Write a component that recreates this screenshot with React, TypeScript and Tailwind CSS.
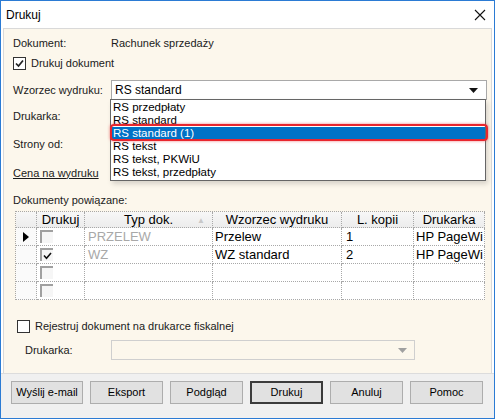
import React from "react";

const ui = { fontFamily: '"Liberation Sans", Arial, sans-serif' };

function WinCheck({ checked }: { checked?: boolean }) {
  return (
    <span className="flex h-[13px] w-[13px] shrink-0 items-center justify-center border border-[#333] bg-white">
      {checked && (
        <svg width="9" height="9" viewBox="0 0 9 9">
          <path d="M1 4.5 L3.5 7 L8 1.5" fill="none" stroke="#222" strokeWidth="1.7" />
        </svg>
      )}
    </span>
  );
}

function GridCheck({ checked }: { checked?: boolean }) {
  return (
    <span className="flex h-[13px] w-[13px] items-center justify-center border-l-2 border-t-2 border-l-[#a0a0a0] border-t-[#a0a0a0] bg-[#f6f6f6]">
      {checked && (
        <svg width="9" height="8" viewBox="0 0 9 8">
          <path d="M1 3.5 L3.5 6.2 L8 1" fill="none" stroke="#111" strokeWidth="1.6" />
        </svg>
      )}
    </span>
  );
}

const cols = "grid grid-cols-[21px_48px_128px_129px_72px_71px]";
const cell = "border-r border-b border-dotted border-[#a8a8a8] flex items-center overflow-hidden whitespace-nowrap";

const rows = [
  { mark: true, checked: false, typ: "PRZELEW", wz: "Przelew", kop: "1", dr: "HP PageWi" },
  { mark: false, checked: true, typ: "WZ", wz: "WZ standard", kop: "2", dr: "HP PageWi" },
  { mark: false, checked: false, typ: "", wz: "", kop: "", dr: "" },
  { mark: false, checked: false, typ: "", wz: "", kop: "", dr: "" },
];

const options = [
  "RS przedpłaty",
  "RS standard",
  "RS standard (1)",
  "RS tekst",
  "RS tekst, PKWiU",
  "RS tekst, przedpłaty",
];

export default function App() {
  return (
    <div
      style={ui}
      className="relative flex h-[419px] w-[495px] flex-col border border-[#2b7bd4] bg-white text-[11px] text-[#1a1a1a]"
    >
      {/* title bar */}
      <div className="flex h-[27px] shrink-0 items-center justify-between pl-[5px] pr-[8px]">
        <span className="text-[12px] text-black">Drukuj</span>
        <svg width="12" height="12" viewBox="0 0 12 12">
          <path d="M1 1 L11 11 M11 1 L1 11" stroke="#111" strokeWidth="1.1" />
        </svg>
      </div>

      {/* body */}
      <div className="relative mx-[2px] flex h-[345px] shrink-0 flex-col border border-b-0 border-[#d9d9d9] bg-[#fcf7ec] pl-[9px]">
        <div className="mt-[6px] flex h-[16px] items-center">
          <span className="w-[98px]">Dokument:</span>
          <span>Rachunek sprzedaży</span>
        </div>
        <div className="mt-[4px] flex h-[16px] items-center gap-[5px]">
          <WinCheck checked />
          <span>Drukuj dokument</span>
        </div>
        <div className="mt-[9px] flex h-[20px] items-center">
          <span className="w-[98px]">Wzorzec wydruku:</span>
          <div className="flex h-[20px] w-[376px] items-center justify-between border border-[#a9a9a9] bg-white pl-[3px] pr-[8px] text-[12px] text-black">
            <span>RS standard</span>
            <svg width="9" height="5" viewBox="0 0 9 5">
              <path d="M0 0 H9 L4.5 5 Z" fill="#111" />
            </svg>
          </div>
        </div>
        <div className="mt-[8px] flex h-[16px] items-center">Drukarka:</div>
        <div className="mt-[12px] flex h-[16px] items-center">Strony od:</div>
        <div className="mt-[13px] flex h-[16px] items-center">
          <span className="underline">Cena na wydruku</span>
        </div>
        <div className="mt-[11px] flex h-[16px] items-center">Dokumenty powiązane:</div>

        {/* grid */}
        <div className="ml-[2px] mt-[3px] w-[470px] border-l border-t border-dotted border-[#a8a8a8] text-[13px] text-black">
          <div className={`${cols} h-[16px] bg-gradient-to-b from-[#f7f7f7] to-[#ececec]`}>
            <div className={cell} />
            <div className={`${cell} justify-center`}>Drukuj</div>
            <div className={`${cell} relative justify-center`}>
              Typ dok.
              <span className="absolute right-[7px] top-[3px] text-[8px] text-[#c8c8c8]">▲</span>
            </div>
            <div className={`${cell} justify-center`}>Wzorzec wydruku</div>
            <div className={`${cell} justify-center`}>L. kopii</div>
            <div className={`${cell} justify-center`}>Drukarka</div>
          </div>
          {rows.map((r, i) => (
            <div key={i} className={`${cols} h-[18px]`}>
              <div className={`${cell} justify-center bg-[#fafafa]`}>
                {r.mark && (
                  <svg width="6" height="10" viewBox="0 0 6 10">
                    <path d="M0 0 L6 5 L0 10 Z" fill="#000" />
                  </svg>
                )}
              </div>
              <div className={`${cell} bg-white pl-[3px]`}>
                <GridCheck checked={r.checked} />
              </div>
              <div className={`${cell} bg-white pl-[3px] text-[#a8a8a8]`}>{r.typ}</div>
              <div className={`${cell} bg-white pl-[2px]`}>{r.wz}</div>
              <div className={`${cell} bg-white pl-[4px]`}>{r.kop}</div>
              <div className={`${cell} bg-white pl-[2px]`}>{r.dr}</div>
            </div>
          ))}
        </div>

        <div className="ml-[4px] mt-[18px] flex h-[16px] items-center gap-[5px]">
          <WinCheck />
          <span>Rejestruj dokument na drukarce fiskalnej</span>
        </div>
        <div className="ml-[12px] mt-[6px] flex h-[20px] items-center">
          <span className="w-[86px]">Drukarka:</span>
          <div className="flex h-[20px] w-[304px] items-center justify-end border border-[#cfcfcf] bg-[#fcf7ec] pr-[7px]">
            <svg width="9" height="5" viewBox="0 0 9 5">
              <path d="M0 0 H9 L4.5 5 Z" fill="#a0a0a0" />
            </svg>
          </div>
        </div>

        {/* open dropdown list */}
        <div className="absolute left-[106px] top-[70px] flex w-[376px] flex-col border border-[#666] bg-white py-px text-[11.5px] text-black shadow-[2px_3px_5px_rgba(0,0,0,0.15)]">
          {options.map((o, i) => (
            <div
              key={o}
              className={`h-[13px] pl-[2px] leading-[13px] ${i === 2 ? "bg-[#0072c6] text-white" : ""}`}
            >
              {o}
            </div>
          ))}
        </div>
        <div className="absolute left-[106px] top-[95px] h-[17px] w-[378px] rounded-[4px] border-2 border-[#e8262e] shadow-[0_0_3px_rgba(232,38,46,0.6)]" />
      </div>

      {/* bottom bar */}
      <div className="flex flex-1 gap-[7px] border-t border-[#dcdcdc] bg-[#f0f0f0] pl-[10px] pt-[7px]">
        {["Wyślij e-mail", "Eksport", "Podgląd", "Drukuj", "Anuluj", "Pomoc"].map((b, i) => (
          <button
            key={b}
            className={`flex h-[23px] items-center justify-center bg-[#e1e1e1] text-[11px] text-black ${
              i === 0 ? "w-[72px]" : "w-[73px]"
            } ${i === 3 ? "border-2 border-[#3c3c3c]" : "border border-[#adadad]"}`}
          >
            {b}
          </button>
        ))}
      </div>
    </div>
  );
}
